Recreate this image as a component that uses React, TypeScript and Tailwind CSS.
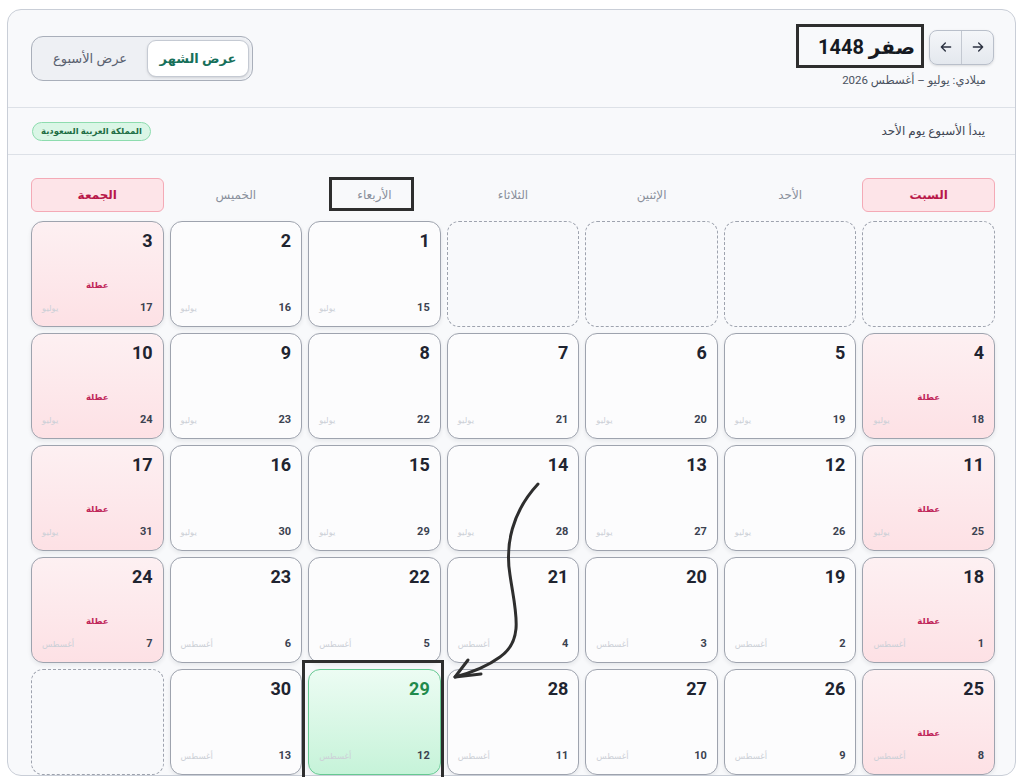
import React from "react";

type Cell =
  | null
  | { d: number; g: number; m: string; holiday?: boolean; today?: boolean };

const JUL = "يوليو";
const AUG = "أغسطس";

const days = ["السبت", "الأحد", "الإثنين", "الثلاثاء", "الأربعاء", "الخميس", "الجمعة"];

const rows: Cell[][] = [
  [null, null, null, null, { d: 1, g: 15, m: JUL }, { d: 2, g: 16, m: JUL }, { d: 3, g: 17, m: JUL, holiday: true }],
  [
    { d: 4, g: 18, m: JUL, holiday: true },
    { d: 5, g: 19, m: JUL },
    { d: 6, g: 20, m: JUL },
    { d: 7, g: 21, m: JUL },
    { d: 8, g: 22, m: JUL },
    { d: 9, g: 23, m: JUL },
    { d: 10, g: 24, m: JUL, holiday: true },
  ],
  [
    { d: 11, g: 25, m: JUL, holiday: true },
    { d: 12, g: 26, m: JUL },
    { d: 13, g: 27, m: JUL },
    { d: 14, g: 28, m: JUL },
    { d: 15, g: 29, m: JUL },
    { d: 16, g: 30, m: JUL },
    { d: 17, g: 31, m: JUL, holiday: true },
  ],
  [
    { d: 18, g: 1, m: AUG, holiday: true },
    { d: 19, g: 2, m: AUG },
    { d: 20, g: 3, m: AUG },
    { d: 21, g: 4, m: AUG },
    { d: 22, g: 5, m: AUG },
    { d: 23, g: 6, m: AUG },
    { d: 24, g: 7, m: AUG, holiday: true },
  ],
  [
    { d: 25, g: 8, m: AUG, holiday: true },
    { d: 26, g: 9, m: AUG },
    { d: 27, g: 10, m: AUG },
    { d: 28, g: 11, m: AUG },
    { d: 29, g: 12, m: AUG, today: true },
    { d: 30, g: 13, m: AUG },
    null,
  ],
];

function DayCell({ c }: { c: Cell }) {
  if (!c) {
    return <div className="h-[106px] rounded-[12px] border-[1.5px] border-dashed border-[#9ea3ae]" />;
  }
  const base = c.today
    ? "bg-gradient-to-b from-[#ecfcf3] to-[#c6f3d9] border-[#66c992]"
    : c.holiday
    ? "bg-gradient-to-b from-[#fdf0f2] to-[#fde1e5] border-[#9ea3ae]"
    : "bg-[#fcfcfd] border-[#9ea3ae]";
  return (
    <div className={`h-[106px] rounded-[12px] border-[1.5px] shadow-[0_2px_4px_rgba(15,23,42,0.08)] flex flex-col px-[10px] pt-[7px] pb-[10px] ${base}`}>
      <div className={`h-[24px] leading-[24px] text-[18px] font-bold text-right ${c.today ? "text-[#1f8a4c]" : "text-[#1f2430]"}`}>
        {c.d}
      </div>
      <div className="flex-1 flex items-end justify-center pb-[9px]">
        {c.holiday && <span className="text-[8.5px] leading-[12px] font-bold text-[#c0265a]">عطلة</span>}
      </div>
      <div className="h-[16px] flex items-center justify-between">
        <span className="text-[11px] font-bold text-[#3b4250]">{c.g}</span>
        <span className="text-[8.5px] text-[#ccd0d7]">{c.m}</span>
      </div>
    </div>
  );
}

export default function App() {
  return (
    <div
      className="relative w-[1024px] h-[777px] overflow-hidden bg-white"
      style={{ fontFamily: 'Roboto, "DejaVu Sans", sans-serif' }}
    >
      <div dir="rtl" className="ml-[7px] mt-[9px] w-[1009px] rounded-[14px] border-[1.5px] border-[#c9ced7] bg-[#f8f9fb] overflow-hidden">
        {/* header */}
        <div className="h-[98px] flex items-center justify-between pl-[23px] pr-[21px] border-b border-[#dde1e7]">
          <div className="flex flex-col items-start gap-[7px] pt-[2px]">
            <div className="flex items-center gap-[14px]">
              <div className="flex h-[35px] w-[65px] rounded-[8px] border border-[#b9bfca] bg-gradient-to-b from-[#f4f6f9] to-[#e4e8ee] overflow-hidden shadow-sm">
                <div className="flex-1 flex items-center justify-center text-[#2b3140] border-l border-[#c3c8d1]">
                  <svg width="16" height="16" viewBox="0 0 24 24" fill="none" stroke="currentColor" strokeWidth="2" strokeLinecap="round" strokeLinejoin="round"><path d="M5 12h14M13 6l6 6-6 6" /></svg>
                </div>
                <div className="flex-1 flex items-center justify-center text-[#2b3140]">
                  <svg width="16" height="16" viewBox="0 0 24 24" fill="none" stroke="currentColor" strokeWidth="2" strokeLinecap="round" strokeLinejoin="round"><path d="M19 12H5M11 6l-6 6 6 6" /></svg>
                </div>
              </div>
              <div className="text-[20px] font-bold text-[#161a22] leading-[28px]">صفر 1448</div>
            </div>
            <div className="text-[11.5px] font-normal text-[#4a5260] pr-[8px]">ميلادي: يوليو – أغسطس 2026</div>
          </div>
          <div className="flex items-center h-[45px] w-[222px] rounded-[12px] border-[1.5px] border-[#a9afba] bg-[#eef0f4] p-[3px] gap-[2px]">
            <div className="h-full w-[102px] rounded-[9px] bg-white border border-[#c5cad3] flex items-center justify-center text-[13px] font-bold text-[#17705a] shadow-sm">
              عرض الشهر
            </div>
            <div className="flex-1 flex items-center justify-center text-[13px] font-normal text-[#5a6170]">عرض الأسبوع</div>
          </div>
        </div>
        {/* toolbar */}
        <div className="h-[47px] flex items-center justify-between pl-[24px] pr-[30px] border-b border-[#dde1e7]">
          <div className="text-[12px] font-normal text-[#3f4654]">يبدأ الأسبوع يوم الأحد</div>
          <div className="h-[19px] px-[8px] rounded-full border border-[#8ddcae] bg-[#daf6e6] flex items-center text-[8.5px] font-bold text-[#1f6e45]">
            المملكة العربية السعودية
          </div>
        </div>
        {/* grid */}
        <div className="pl-[23px] pr-[20px] pt-[23px]">
          <div className="grid grid-cols-7 gap-x-[6px] mb-[9px]">
            {days.map((d, i) =>
              i === 0 || i === 6 ? (
                <div key={d} className="h-[34px] rounded-[6px] border-[1.5px] border-[#f4aab6] bg-[#fde4e8] flex items-center justify-center text-[12px] font-bold text-[#b8184a]">
                  {d}
                </div>
              ) : (
                <div key={d} className="h-[34px] flex items-center justify-center text-[12px] font-normal text-[#8a909c]">
                  {d}
                </div>
              )
            )}
          </div>
          <div className="grid grid-cols-7 gap-[6px]">
            {rows.flat().map((c, i) => (
              <DayCell key={i} c={c} />
            ))}
          </div>
        </div>
      </div>

      {/* annotation overlays */}
      <div className="absolute left-[796px] top-[24px] w-[128px] h-[44px] border-[3px] border-[#2e2e2e]" />
      <div className="absolute left-[329px] top-[177px] w-[85px] h-[34px] border-[3px] border-[#2e2e2e]" />
      <div className="absolute left-[302px] top-[660px] w-[142px] h-[130px] border-[3px] border-[#2e2e2e]" />
      <svg className="absolute left-0 top-0 pointer-events-none" width="1024" height="777" viewBox="0 0 1024 777">
        <path d="M538 484 C 512 512, 505 545, 510 575 C 515 610, 525 640, 500 657 C 485 668, 470 673, 455 677" fill="none" stroke="#2e2e2e" strokeWidth="3" strokeLinecap="round" />
        <path d="M468 660 L 455 677 L 481 674" fill="none" stroke="#2e2e2e" strokeWidth="3" strokeLinecap="round" strokeLinejoin="round" />
      </svg>
    </div>
  );
}
